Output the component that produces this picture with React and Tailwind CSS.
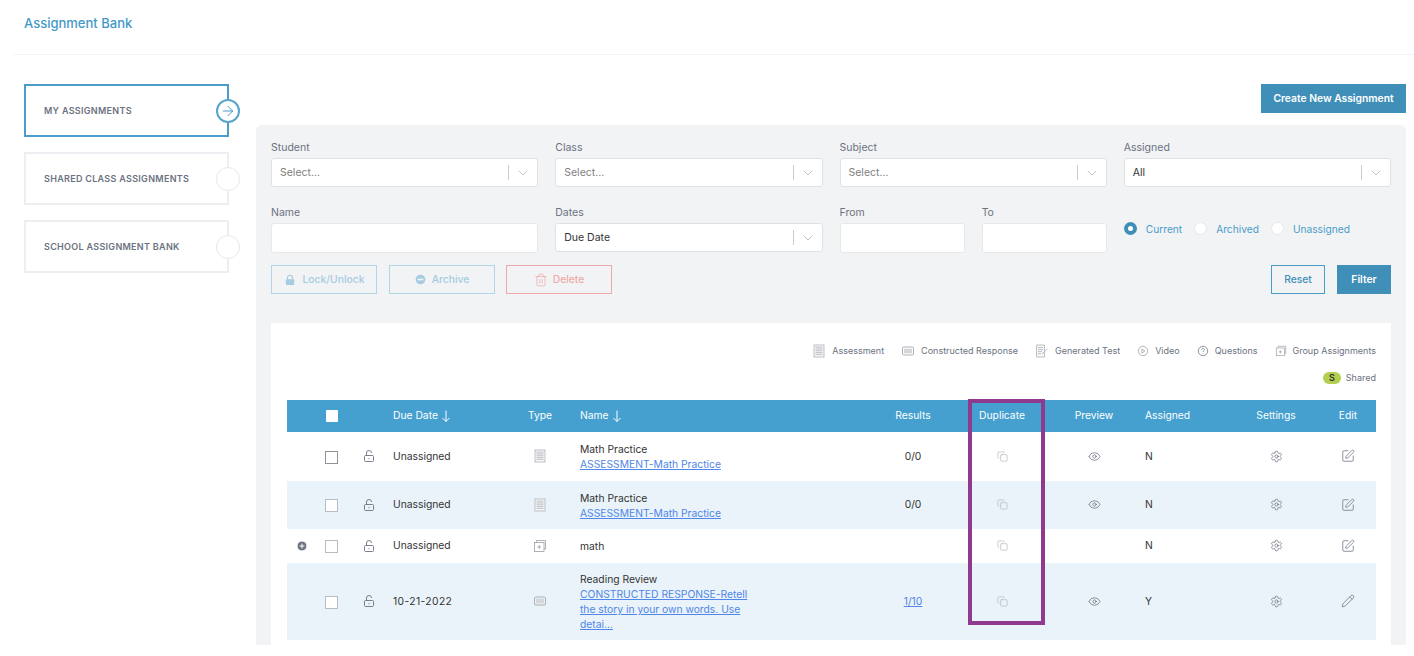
import React from 'react';
import { ArrowRight, ChevronDown, Copy, Eye, Settings, SquarePen, Pencil, Trash2, PlusCircle } from 'lucide-react';

const font = { fontFamily: 'Inter, "Noto Sans", sans-serif' };

function SideTab({ label, active }) {
  return (
    <div className={`relative flex h-[53px] w-[205px] items-center bg-white pl-[18px] text-[9px] font-semibold uppercase tracking-[0.3px] text-[#6b7280] ${active ? 'border-2 border-[#4a9cc9]' : 'border-2 border-[#eceef2]'}`}>
      {label}
      <span className={`absolute right-[-13px] top-1/2 flex h-6 w-6 -translate-y-1/2 items-center justify-center rounded-full bg-white ${active ? 'border-2 border-[#5aa5cd]' : 'border border-[#e6e8ee]'}`}>
        {active && <ArrowRight className="h-4 w-4 text-[#4a9cc9]" strokeWidth={1.5} />}
      </span>
    </div>
  );
}

function SelectBox({ label, value, placeholder }) {
  return (
    <div>
      <p className="mb-[3px] text-[10.5px] leading-[14px] text-[#6b7280]">{label}</p>
      <div className="flex h-[29px] items-center rounded-[3px] border border-[#dfe1e5] bg-white pl-2">
        <span className={`flex-1 text-[10.5px] ${placeholder ? 'text-[#808080]' : 'text-[#333333]'}`}>{value}</span>
        <span className="h-[15px] w-px bg-[#cccccc]" />
        <span className="flex w-[28px] justify-center">
          <ChevronDown className="h-4 w-4 text-[#c4c4c4]" strokeWidth={1.5} />
        </span>
      </div>
    </div>
  );
}

function TextField({ label }) {
  return (
    <div>
      <p className="mb-[3px] text-[10.5px] leading-[14px] text-[#6b7280]">{label}</p>
      <div className="h-[30px] rounded-[3px] border border-[#e6e8ea] bg-white" />
    </div>
  );
}

function Radio({ label, checked }) {
  return (
    <div className="flex items-center">
      {checked ? (
        <span className="-mt-[2px] h-[13px] w-[13px] rounded-full border-[4px] border-[#3f8fb9] bg-white" />
      ) : (
        <span className="-mt-[2px] h-[13px] w-[13px] rounded-full border border-[#e6e8ea] bg-white" />
      )}
      <span className="ml-[9px] text-[10.2px] text-[#4a9cc9]">{label}</span>
    </div>
  );
}

function DocIcon({ className = 'h-[14px] w-[14px]' }) {
  return (
    <svg viewBox="0 0 14 14" className={className} fill="none" stroke="#aeb1b8" strokeWidth="0.8">
      <rect x="2" y="1" width="10" height="12" fill="#f7f7f8" />
      <path d="M3.5 3.2h7M3.5 5h7M3.5 6.8h7M3.5 8.6h7M3.5 10.4h7" />
    </svg>
  );
}

function ResponseIcon({ className = 'h-[14px] w-[14px]' }) {
  return (
    <svg viewBox="0 0 14 14" className={className} fill="none" stroke="#9a9ea6" strokeWidth="0.8">
      <rect x="1.5" y="3" width="11" height="8" rx="1" />
      <rect x="3" y="4.7" width="8" height="4.6" fill="#d4d6da" stroke="none" />
    </svg>
  );
}

function GroupIcon({ className = 'h-[14px] w-[14px]' }) {
  return (
    <svg viewBox="0 0 14 14" className={className} fill="none" stroke="#9a9ea6" strokeWidth="0.8">
      <path d="M3.5 3V1.5h9V10H11" />
      <rect x="1.5" y="3.5" width="9.5" height="9" fill="#fff" />
      <path d="M6.2 6v4M4.2 8h4" />
    </svg>
  );
}

function TestIcon() {
  return (
    <svg viewBox="0 0 14 14" className="h-[14px] w-[14px]" fill="none" stroke="#aeb1b8" strokeWidth="0.8">
      <path d="M1.5 1h8v12h-8z" fill="#f7f7f8" />
      <path d="M3 3.5h5M3 5.5h5M3 7.5h4M3 9.5h3M7 10l5.5-5.5" />
    </svg>
  );
}

function PlayIcon() {
  return (
    <svg viewBox="0 0 14 14" className="h-[12px] w-[12px]" fill="none" stroke="#8f939b" strokeWidth="0.8">
      <circle cx="7" cy="7" r="5.5" />
      <path d="M5.7 4.7v4.6L9.2 7z" />
    </svg>
  );
}

function QuestionIcon() {
  return (
    <svg viewBox="0 0 14 14" className="h-[12px] w-[12px]" fill="none" stroke="#6b7280" strokeWidth="0.9">
      <circle cx="7" cy="7" r="5.5" />
      <path d="M5.4 5.6a1.6 1.6 0 1 1 2.4 1.4c-.5.3-.8.6-.8 1.2M7 9.6v.6" />
    </svg>
  );
}

function SolidLock() {
  return (
    <svg viewBox="0 0 12 12" className="h-3 w-3">
      <path d="M3.5 5.5V3.8a2.5 2.5 0 0 1 5 0v1.7" fill="none" stroke="#a5cce2" strokeWidth="1.1" />
      <rect x="1.8" y="5.2" width="8.4" height="5.8" rx="1" fill="#a5cce2" />
    </svg>
  );
}

function SolidMinus() {
  return (
    <svg viewBox="0 0 12 12" className="h-[11px] w-[11px]">
      <circle cx="6" cy="6" r="5.3" fill="#a5cce2" />
      <rect x="2.8" y="5.1" width="6.4" height="1.8" fill="#f2f3f5" />
    </svg>
  );
}

function OpenLock() {
  return (
    <svg viewBox="0 0 12 12" className="mx-auto h-3 w-3" fill="none" stroke="#6b7280" strokeWidth="0.9">
      <rect x="1.5" y="5.5" width="9" height="6" rx="1" />
      <path d="M3.5 5.5V3a2.5 2.5 0 0 1 5 0" />
      <path d="M6 8v1.2" />
    </svg>
  );
}

function SortArrow() {
  return (
    <svg viewBox="0 0 10 12" className="ml-[3px] h-3 w-[10px]" fill="none" stroke="white" strokeWidth="1">
      <path d="M5 .5v11M1.5 8 5 11.5 8.5 8" />
    </svg>
  );
}

function LegendItem({ icon, label }) {
  return (
    <div className="flex items-center gap-[6px]">
      {icon}
      <span className="text-[9px] text-[#6b7280]">{label}</span>
    </div>
  );
}

const rows = [
  { h: 'h-[49px]', bg: 'bg-white', due: 'Unassigned', type: <DocIcon />, title: 'Math Practice', link: 'ASSESSMENT-Math Practice', results: '0/0', preview: true, assigned: 'N' },
  { h: 'h-[48px]', bg: 'bg-[#eaf3f9]', due: 'Unassigned', type: <DocIcon />, title: 'Math Practice', link: 'ASSESSMENT-Math Practice', results: '0/0', preview: true, assigned: 'N' },
  { h: 'h-[34px]', bg: 'bg-white', due: 'Unassigned', type: <GroupIcon />, title: 'math', expand: true, assigned: 'N' },
  { h: 'h-[77px]', bg: 'bg-[#eaf3f9]', due: '10-21-2022', type: <ResponseIcon />, title: 'Reading Review', link: 'CONSTRUCTED RESPONSE-Retell the story in your own words. Use detai...', results: '1/10', resultsLink: true, preview: true, assigned: 'Y', pencil: true },
];

function App() {
  return (
    <div className="h-[656px] w-[1414px] overflow-hidden bg-white" style={font}>
      <div className="ml-[14px] flex h-[55px] items-start border-b border-[#f2f3f5] pl-[10px] pt-[14px]">
        <h1 className="text-[13px] font-medium leading-[18px] text-[#4299c7]">Assignment Bank</h1>
      </div>

      <div className="flex pl-[24px] pr-2 pt-[29px]">
        <div className="flex w-[232px] shrink-0 flex-col gap-[15px]">
          <SideTab label="My Assignments" active />
          <SideTab label="Shared Class Assignments" />
          <SideTab label="School Assignment Bank" />
        </div>

        <div className="flex-1">
          <div className="flex justify-end">
            <button className="h-[29px] w-[145px] bg-[#3f8fb9] text-[10.3px] font-semibold text-white">Create New Assignment</button>
          </div>

          <div className="mt-3 h-[520px] overflow-hidden rounded-t-md bg-[#f2f3f5] px-[15px] pt-[16px]">
            <div className="grid grid-cols-4 gap-x-[17px]">
              <SelectBox label="Student" value="Select..." placeholder />
              <SelectBox label="Class" value="Select..." placeholder />
              <SelectBox label="Subject" value="Select..." placeholder />
              <SelectBox label="Assigned" value="All" />
            </div>

            <div className="mt-[19px] grid grid-cols-4 gap-x-[17px]">
              <TextField label="Name" />
              <SelectBox label="Dates" value="Due Date" />
              <div className="grid grid-cols-2 gap-x-[17px]">
                <TextField label="From" />
                <TextField label="To" />
              </div>
              <div className="flex items-center gap-[12px] py-[7px]">
                <Radio label="Current" checked />
                <Radio label="Archived" />
                <Radio label="Unassigned" />
              </div>
            </div>

            <div className="mt-[12px] flex items-center">
              <button className="flex h-[29px] w-[106px] items-center justify-center gap-[7px] border border-[#b4d5e8] text-[10.3px] font-medium text-[#a5cce2]">
                <SolidLock />
                Lock/Unlock
              </button>
              <button className="ml-[12px] flex h-[29px] w-[106px] items-center justify-center gap-[6px] border border-[#b4d5e8] text-[10.3px] font-medium text-[#a5cce2]">
                <SolidMinus />
                Archive
              </button>
              <button className="ml-[11px] flex h-[29px] w-[106px] items-center justify-center gap-[5px] border border-[#eeaaaa] text-[10.3px] font-medium text-[#efabab]">
                <Trash2 className="h-[14px] w-[14px]" strokeWidth={1.3} />
                Delete
              </button>
              <button className="ml-auto h-[29px] w-[54px] border border-[#4a9cc9] text-[10.3px] font-medium text-[#3f8fb9]">Reset</button>
              <button className="ml-[12px] h-[29px] w-[54px] bg-[#3f8fb9] text-[10.3px] font-semibold text-white">Filter</button>
            </div>

            <div className="relative mt-[29px] h-full bg-white pl-4 pr-[15px] pt-[21px]">
              <div className="flex items-center justify-end gap-[17px]">
                <LegendItem icon={<DocIcon />} label="Assessment" />
                <LegendItem icon={<ResponseIcon />} label="Constructed Response" />
                <LegendItem icon={<TestIcon />} label="Generated Test" />
                <LegendItem icon={<PlayIcon />} label="Video" />
                <LegendItem icon={<QuestionIcon />} label="Questions" />
                <LegendItem icon={<GroupIcon className="h-[12px] w-[12px]" />} label="Group Assignments" />
              </div>
              <div className="mt-[13px] flex items-center justify-end gap-[5px]">
                <span className="flex h-[12px] w-[18px] items-center justify-center rounded-full bg-[#b4cf4f] text-[9px] font-semibold text-[#333333]">S</span>
                <span className="text-[9px] text-[#6b7280]">Shared</span>
              </div>

              <table className="mt-[15px] w-[1089px] table-fixed border-collapse text-[10.3px] text-[#333333]">
                <colgroup>
                  <col className="w-[30px]" />
                  <col className="w-[29px]" />
                  <col className="w-[46px]" />
                  <col className="w-[122px]" />
                  <col className="w-[52px]" />
                  <col className="w-[300px]" />
                  <col className="w-[94px]" />
                  <col className="w-[84px]" />
                  <col className="w-[100px]" />
                  <col className="w-[92px]" />
                  <col className="w-[80px]" />
                  <col className="w-[60px]" />
                </colgroup>
                <thead>
                  <tr className="h-[32px] bg-[#45a0d0] text-[10.3px] font-normal text-white">
                    <th />
                    <th><span className="mx-auto block h-3 w-3 rounded-[1px] bg-white" /></th>
                    <th />
                    <th className="pl-px text-left font-normal">
                      <span className="inline-flex items-center">Due Date <SortArrow /></span>
                    </th>
                    <th className="font-normal">Type</th>
                    <th className="pl-[14px] text-left font-normal">
                      <span className="inline-flex items-center">Name <SortArrow /></span>
                    </th>
                    <th className="font-normal">Results</th>
                    <th className="font-normal">Duplicate</th>
                    <th className="font-normal">Preview</th>
                    <th className="pl-px text-left font-normal">Assigned</th>
                    <th className="font-normal">Settings</th>
                    <th className="pl-1 font-normal">Edit</th>
                  </tr>
                </thead>
                <tbody>
                  {rows.map((row, i) => (
                    <tr key={i} className={`${row.h} ${row.bg}`}>
                      <td className="pl-[9px]">
                        {row.expand && <PlusCircle className="h-[12px] w-[12px] fill-[#6b7280] stroke-white" strokeWidth={2} />}
                      </td>
                      <td><span className={`mx-auto mt-[2px] block h-[13px] w-[13px] border bg-white ${i === 0 ? 'border-[#8f939b]' : 'border-[#b9bcc2]'}`} /></td>
                      <td><OpenLock /></td>
                      <td className={`pl-px pt-px ${row.due.startsWith('1') ? 'tracking-[0.4px]' : ''}`}>{row.due}</td>
                      <td><span className="flex justify-center">{row.type}</span></td>
                      <td className="pl-[14px] pt-[2px] leading-[15px]">
                        <div>{row.title}</div>
                        {row.link && <a className="block w-[172px] text-[#4f86e8] underline">{row.link}</a>}
                      </td>
                      <td className="pt-px text-center">
                        {row.resultsLink ? <a className="text-[#4f86e8] underline">{row.results}</a> : row.results}
                      </td>
                      <td><Copy className="mx-auto h-[11px] w-[11px] text-[#b4b6ba]" strokeWidth={1.5} /></td>
                      <td>{row.preview && <Eye className="mx-auto h-[13px] w-[13px] text-[#6b7280]" strokeWidth={1.4} />}</td>
                      <td className="pl-px pt-px">{row.assigned}</td>
                      <td><Settings className="mx-auto h-[13px] w-[13px] text-[#6b7280]" strokeWidth={1.4} /></td>
                      <td className="pl-1">
                        {row.pencil
                          ? <Pencil className="mx-auto h-[14px] w-[14px] text-[#6b7280]" strokeWidth={1.3} />
                          : <SquarePen className="mx-auto h-[14px] w-[14px] text-[#6b7280]" strokeWidth={1.3} />}
                      </td>
                    </tr>
                  ))}
                </tbody>
              </table>

              {/* purple highlight drawn over the Duplicate column */}
              <div className="absolute left-[697px] top-[76px] h-[226px] w-[77px] border-[4px] border-[#8f3a8f]" />
            </div>
          </div>
        </div>
      </div>
    </div>
  );
}

export default App;
